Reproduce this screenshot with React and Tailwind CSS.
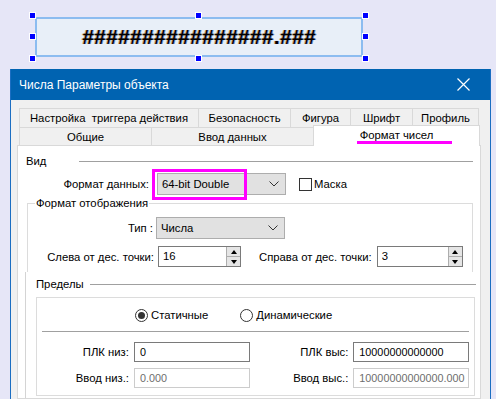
import { useState } from 'react'

const ROW1 = [
  { label: 'Настройка  триггера действия', w: 'w-[179px]' },
  { label: 'Безопасность', w: 'w-[92px]' },
  { label: 'Фигура', w: 'w-[60px]' },
  { label: 'Шрифт', w: 'w-[62px]' },
  { label: 'Профиль', w: 'w-[67px]' },
]

function Handle({ className }) {
  return <div className={`absolute w-[7px] h-[7px] bg-[#0000ff] border border-white ${className}`} />
}

function Chevron() {
  return (
    <svg width="10" height="6" viewBox="0 0 10 6" className="shrink-0">
      <path d="M0.5 0.5 L5 5 L9.5 0.5" fill="none" stroke="#333" strokeWidth="1" />
    </svg>
  )
}

function Combo({ value, children }) {
  return (
    <div className="relative w-[129px] h-[22px] bg-[#e1e1e1] border border-[#adadad] flex items-center justify-between pl-[4px] pr-[6px]">
      <span>{value}</span>
      <Chevron />
      {children}
    </div>
  )
}

function Spin({ value, w }) {
  return (
    <div className={`${w} h-[21px] bg-white border border-[#7a7a7a] flex items-stretch`}>
      <span className="flex-1 pl-[4px] leading-[19px]">{value}</span>
      <div className="w-[14px] flex flex-col border-l border-[#adadad] bg-[#e5e5e5]">
        <div className="flex-1 flex items-center justify-center border-b border-[#adadad]">
          <div className="w-0 h-0 border-x-[3.5px] border-x-transparent border-b-[4px] border-b-black" />
        </div>
        <div className="flex-1 flex items-center justify-center">
          <div className="w-0 h-0 border-x-[3.5px] border-x-transparent border-t-[4px] border-t-black" />
        </div>
      </div>
    </div>
  )
}

function Radio({ checked, label }) {
  return (
    <label className="flex items-center gap-[3px]">
      <span className="w-[13px] h-[13px] rounded-full border border-[#333] bg-white flex items-center justify-center">
        {checked && <span className="w-[7px] h-[7px] rounded-full bg-[#333]" />}
      </span>
      <span>{label}</span>
    </label>
  )
}

function Field({ value, disabled }) {
  return (
    <div
      className={`ml-[5px] w-[117px] h-[20px] border pl-[5px] leading-[18px] text-[10.8px] whitespace-nowrap overflow-hidden ${
        disabled ? 'border-[#cccccc] text-[#6d6d6d]' : 'border-[#7a7a7a]'
      }`}
    >
      {value}
    </div>
  )
}

export default function App() {
  const [mask, setMask] = useState(false)

  return (
    <div className="w-[496px] h-[399px] overflow-hidden bg-[#e6e6f7] text-[11.3px] leading-[16px] text-black font-['Liberation_Sans',sans-serif] flex flex-col">
      {/* widget on canvas */}
      <div className="h-[69px] shrink-0 pl-[35px] pt-[17px]">
        <div className="relative w-[328px] h-[40px] bg-[#e8eff8] border-2 border-[#8cbcf0] rounded-[2px] flex items-center justify-center">
          <span className="font-bold text-[21px] leading-[24px] tracking-[0.3px] [text-shadow:-1px_0_0_rgba(184,106,0,0.55),1px_0_0_rgba(16,64,160,0.55)]">
            ################.###
          </span>
          <Handle className="-left-[8px] -top-[7px]" />
          <Handle className="left-[calc(50%-4px)] -top-[7px]" />
          <Handle className="-right-[8px] -top-[7px]" />
          <Handle className="-left-[8px] top-[calc(50%-4px)]" />
          <Handle className="-right-[8px] top-[calc(50%-4px)]" />
          <Handle className="-left-[8px] -bottom-[7px]" />
          <Handle className="left-[calc(50%-4px)] -bottom-[7px]" />
          <Handle className="-right-[8px] -bottom-[7px]" />
        </div>
      </div>

      {/* dialog */}
      <div className="ml-[10px] w-[481px] flex-1 flex flex-col border-x border-[#1b6ec2] bg-[#f0f0f0]">
        <div className="h-[31px] shrink-0 bg-[#0063b1] text-white text-[12px] flex items-center justify-between pl-[8px] pr-[20px]">
          <span>Числа Параметры объекта</span>
          <svg width="13" height="13" viewBox="0 0 13 13">
            <path d="M0.5 0.5 L12.5 12.5 M12.5 0.5 L0.5 12.5" stroke="white" strokeWidth="1.2" />
          </svg>
        </div>

        <div className="flex-1 pt-[8px] pl-[6px] flex flex-col">
          {/* tabs */}
          <div className="pl-[2px] flex h-[19px]">
            {ROW1.map((t) => (
              <div key={t.label} className={`${t.w} h-full border-t border-l border-[#d9d9d9] last:border-r flex items-center justify-center whitespace-pre`}>
                {t.label}
              </div>
            ))}
          </div>
          <div className="pl-[2px] flex h-[18px] items-end">
            <div className="w-[132px] h-[18px] border-t border-l border-[#d9d9d9] flex items-center justify-center">Общие</div>
            <div className="w-[162px] h-[18px] border-t border-l border-[#d9d9d9] flex items-center justify-center">Ввод данных</div>
            <div className="relative z-10 w-[167px] h-[21px] -mb-[1px] bg-white border-t border-x border-[#d9d9d9] flex items-center justify-center">
              <span className="pb-[2px]">Формат чисел</span>
              <div className="absolute left-[43px] top-[15px] w-[95px] h-[3px] bg-[#ff00ff]" />
            </div>
          </div>

          {/* tab page */}
          <div className="w-[464px] flex-1 bg-white border border-[#d9d9d9] flex flex-col">
            <div className="pt-[7px] pl-[8px] pr-[7px] flex flex-col">
              <div className="h-[16px] flex items-center">
                <span className="w-[53px]">Вид</span>
                <div className="flex-1 h-px bg-[#a0a0a0]" />
              </div>
              <div className="mt-[4px] h-[22px] flex items-center">
                <span className="w-[123px] text-right">Формат данных:</span>
                <div className="ml-[8px]">
                  <Combo value="64-bit Double">
                    <div className="absolute -left-[6px] -top-[5px] w-[95px] h-[31px] border-[3px] border-[#ff00ff]" />
                  </Combo>
                </div>
                <label className="ml-[13px] flex items-center gap-[2px]" onClick={() => setMask(!mask)}>
                  <span className="w-[13px] h-[13px] border border-[#333] bg-white" />
                  <span>Маска</span>
                </label>
              </div>

              {/* Формат отображения */}
              <div className="relative mt-[8px] ml-[1px] h-[69px] border-l border-t border-r border-[#dcdcdc] pt-[13px]">
                <span className="absolute left-[7px] -top-[9px] bg-white px-[1px]">Формат отображения</span>
                <div className="h-[22px] flex items-center">
                  <span className="w-[125px] text-right">Тип :</span>
                  <div className="ml-[3px]">
                    <Combo value="Числа" />
                  </div>
                </div>
                <div className="mt-[7px] h-[21px] flex items-center whitespace-nowrap">
                  <span className="w-[126px] text-right">Слева от дес. точки:</span>
                  <div className="ml-[4px]">
                    <Spin value="16" w="w-[83px]" />
                  </div>
                  <span className="ml-[18px]">Справа от дес. точки:</span>
                  <div className="ml-[5px]">
                    <Spin value="3" w="w-[86px]" />
                  </div>
                </div>
              </div>
            </div>

            {/* Пределы */}
            <div className="ml-[7px] flex-1 bg-white border-l border-[#d4d4d4] pl-[10px] pr-[4px] flex flex-col">
              <div className="h-[24px] flex items-center">
                <span className="w-[54px]">Пределы</span>
                <div className="flex-1 h-px bg-[#a0a0a0]" />
              </div>
              <div className="mt-[1px] mr-[1px] h-[99px] border border-[#dcdcdc] pt-[10px] px-[5px] flex flex-col">
                <div className="h-[14px] flex items-center gap-[32px] pl-[93px]">
                  <Radio checked label="Статичные" />
                  <Radio label="Динамические" />
                </div>
                <div className="mt-[9px] h-px bg-[#a0a0a0]" />
                <div className="mt-[10px] h-[20px] flex items-center">
                  <span className="w-[88px] text-right">ПЛК низ:</span>
                  <Field value="0" />
                  <span className="w-[100px] text-right">ПЛК выс:</span>
                  <Field value="10000000000000" />
                </div>
                <div className="mt-[6px] h-[20px] flex items-center">
                  <span className="w-[88px] text-right">Ввод низ.:</span>
                  <Field value="0.000" disabled />
                  <span className="w-[100px] text-right">Ввод выс.:</span>
                  <Field value="10000000000000.000" disabled />
                </div>
              </div>
            </div>
          </div>
        </div>
      </div>
    </div>
  )
}
